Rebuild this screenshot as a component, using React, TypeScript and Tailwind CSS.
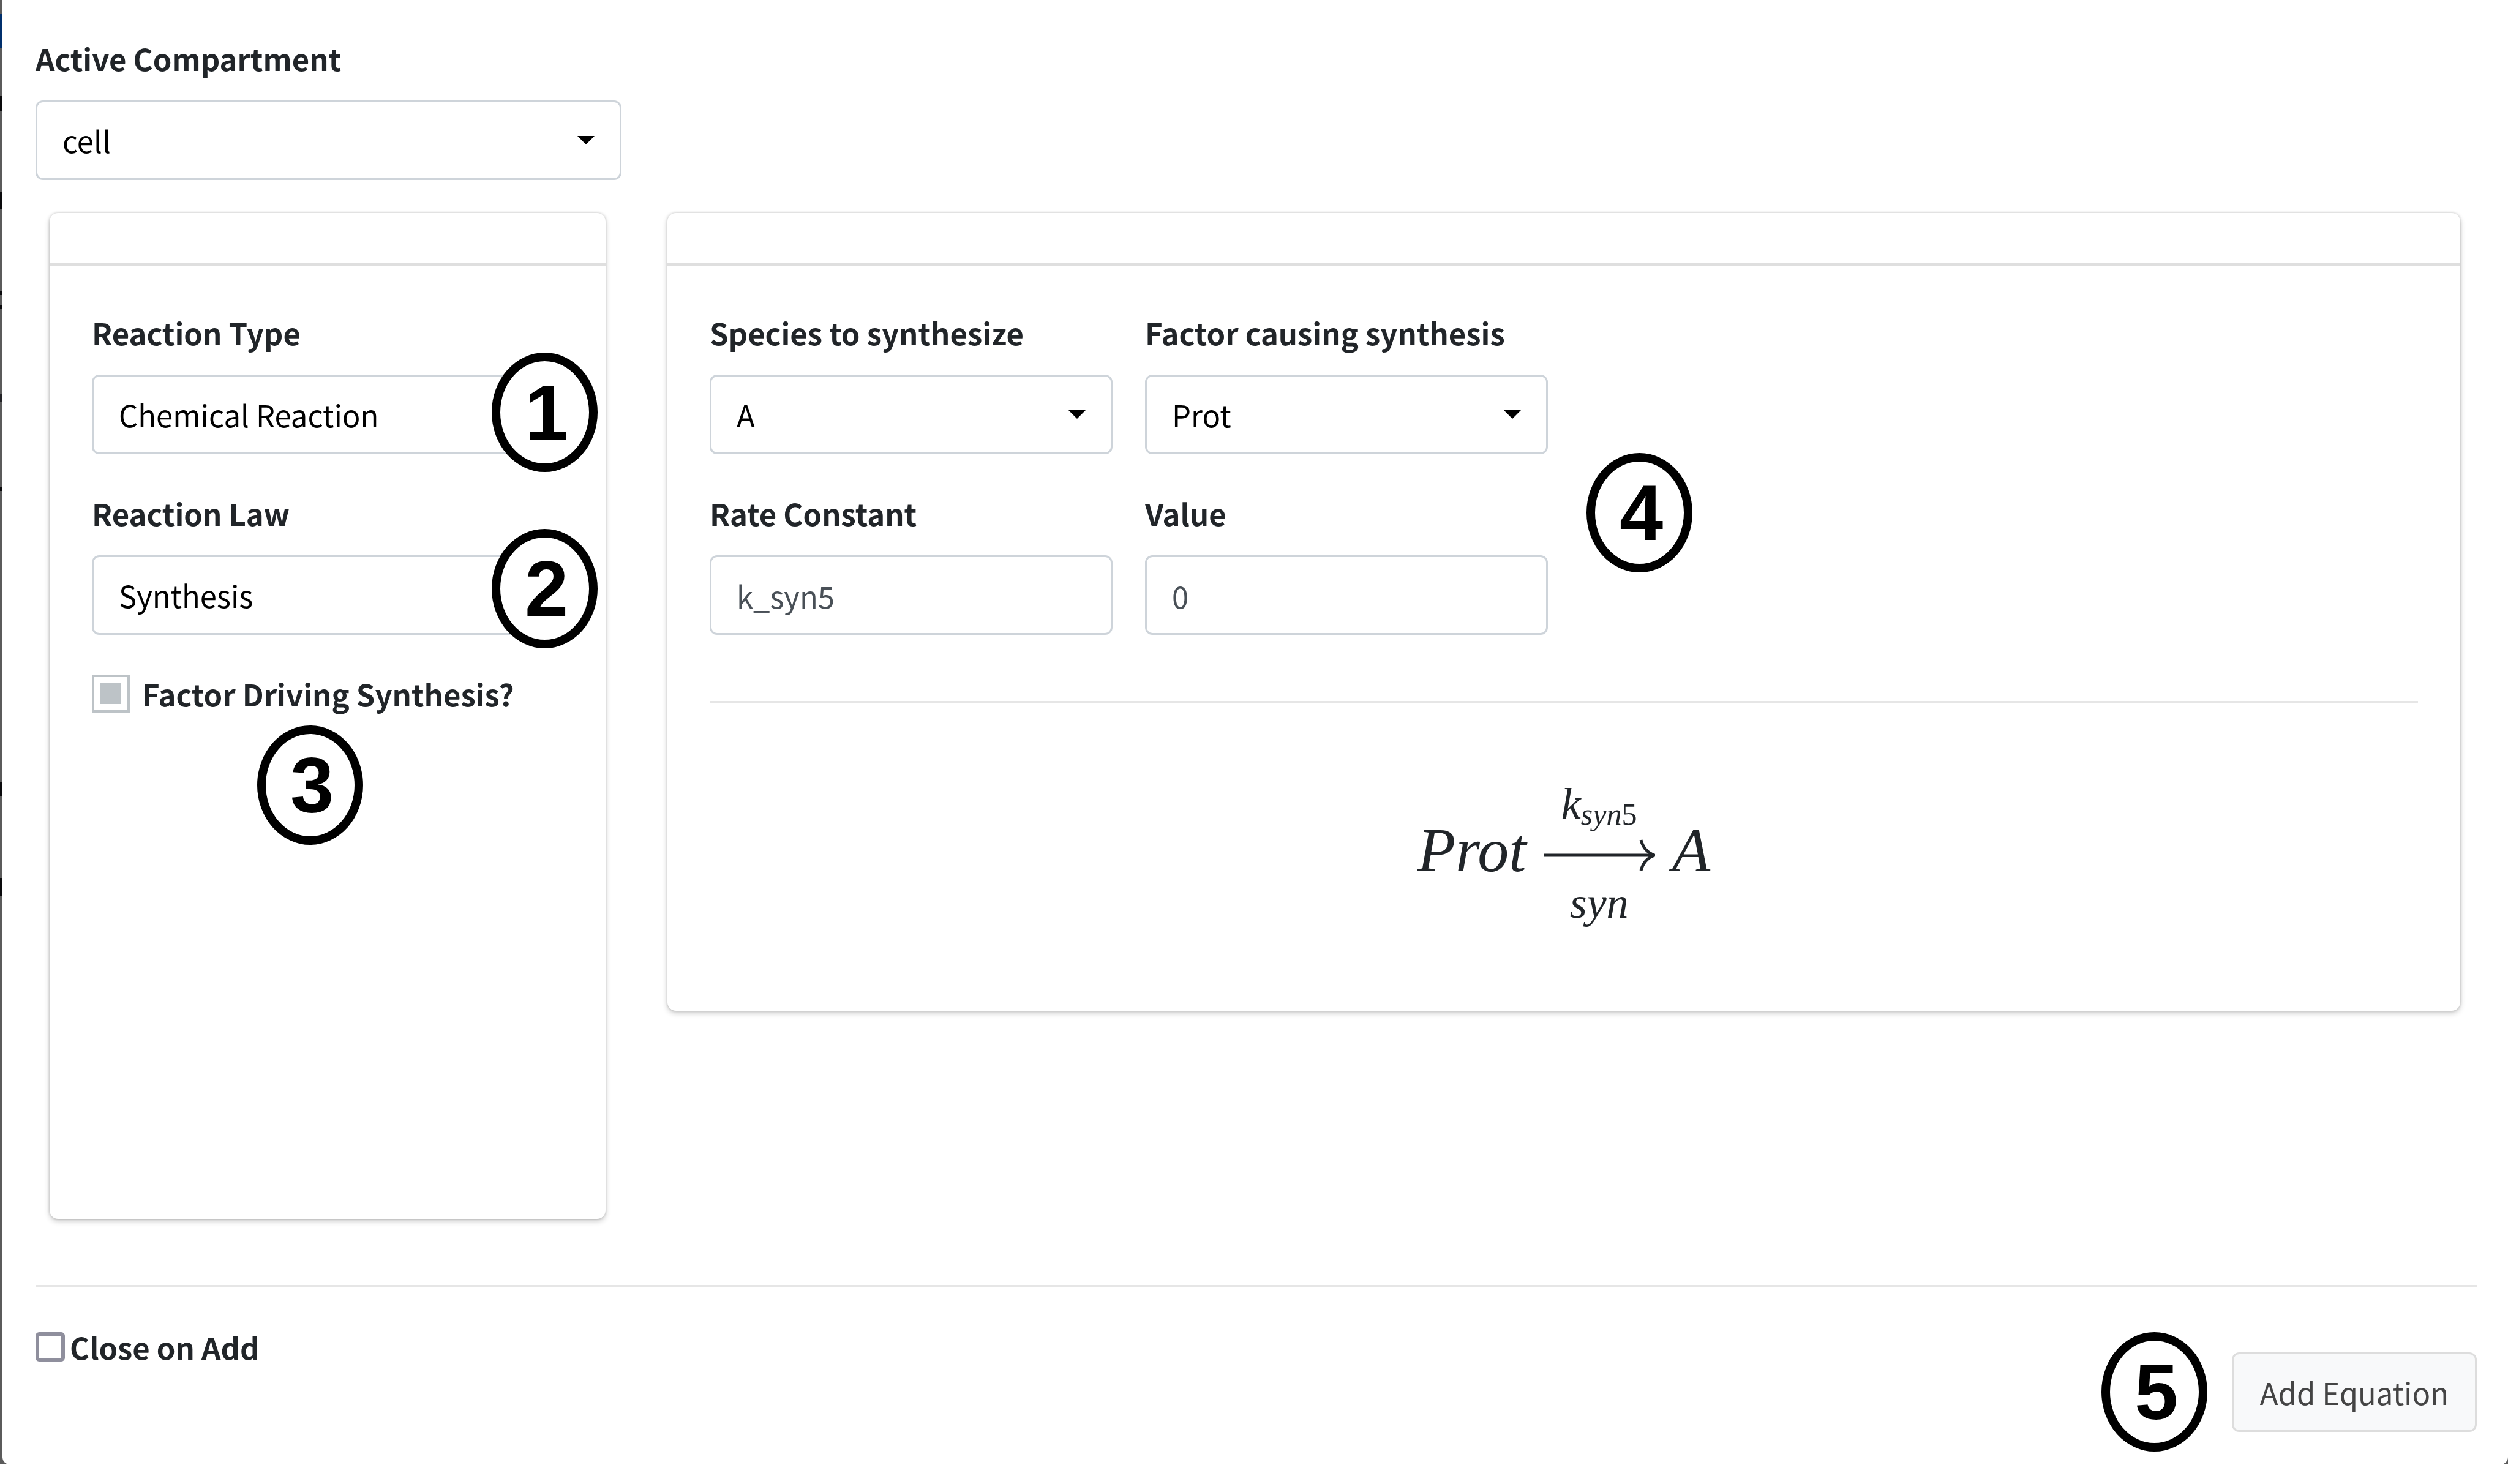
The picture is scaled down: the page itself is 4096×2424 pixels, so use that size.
import type { ReactNode } from "react";

function Badge({ n, className }: { n: number; className: string }) {
  return (
    <span
      className={`absolute z-10 flex h-[195px] w-[173px] items-center justify-center rounded-[50%] border-[14px] border-black bg-white pl-[6px] font-['Liberation_Sans',Arial,sans-serif] text-[128px] leading-none font-bold text-black ${className}`}
    >
      {n}
    </span>
  );
}

function Field({ id, label, children }: { id: string; label: string; children: ReactNode }) {
  return (
    <div className="relative flex flex-col gap-[33px]">
      <label htmlFor={id} className="leading-[72px] font-bold">
        {label}
      </label>
      {children}
    </div>
  );
}

function Select({ id, value }: { id: string; value: string }) {
  return (
    <div className="relative">
      <select
        id={id}
        defaultValue={value}
        className="h-[130px] w-full appearance-none rounded-[12px] border-[3px] border-[#ced4da] bg-white px-[41px] text-black"
      >
        <option>{value}</option>
      </select>
      <svg
        viewBox="0 0 28 14"
        className="pointer-events-none absolute top-[58px] right-[44px] h-[14px] w-[28px]"
        aria-hidden="true"
      >
        <path d="M0 0h28L14 14z" fill="#000" />
      </svg>
    </div>
  );
}

function TextInput({ id, placeholder }: { id: string; placeholder: string }) {
  return (
    <input
      id={id}
      type="text"
      placeholder={placeholder}
      className="h-[130px] w-full rounded-[12px] border-[3px] border-[#ced4da] bg-white px-[41px] placeholder:text-[#495057] placeholder:opacity-100"
    />
  );
}

function Card({ className, children }: { className: string; children: ReactNode }) {
  return (
    <section
      className={`rounded-[14px] bg-white shadow-[0_0_4px_rgba(0,0,0,0.2),0_4px_10px_rgba(0,0,0,0.2)] ${className}`}
    >
      <header className="h-[86px] border-b-[4px] border-[#dfdfdf]" />
      <div className="px-[69px] pt-[73px]">{children}</div>
    </section>
  );
}

function Formula() {
  return (
    <div className="flex items-center justify-center gap-[28px] pt-[127px] font-['Liberation_Serif','Times_New_Roman',serif] text-[102px] leading-[120px] text-[#212529] italic">
      <span className="pb-[10px]">Prot</span>
      <span className="flex flex-col items-center">
        <span className="text-[72px] leading-[76px]">
          k<sub className="bottom-[-10px] text-[50px]">syn<span className="not-italic">5</span></sub>
        </span>
        <svg viewBox="0 0 182 52" className="mt-[20px] mb-[14px] h-[52px] w-[182px]" fill="none" aria-hidden="true">
          <path d="M0 26H178" stroke="#212529" strokeWidth="5" />
          <path d="M159 1C162 13 170 22 181 26C170 30 162 39 159 51" stroke="#212529" strokeWidth="5" />
        </svg>
        <span className="text-[72px] leading-[76px]">syn</span>
      </span>
      <span className="pb-[10px]">A</span>
    </div>
  );
}

const edge = [
  { tone: "bg-[#5b5b5b]", grow: 23 },
  { tone: "bg-[#002f6c]", grow: 56 },
  { tone: "bg-[#5b5b5b]", grow: 79 },
  { tone: "bg-[#0a0a0c]", grow: 24 },
  { tone: "bg-[#5b5b5b]", grow: 134 },
  { tone: "bg-[#0a0a0c]", grow: 28 },
  { tone: "bg-[#5b5b5b]", grow: 134 },
  { tone: "bg-[#0a0a0c]", grow: 7 },
  { tone: "bg-[#5b5b5b]", grow: 17 },
  { tone: "bg-[#0a0a0c]", grow: 6 },
  { tone: "bg-[#5b5b5b]", grow: 139 },
  { tone: "bg-[#222226]", grow: 14 },
  { tone: "bg-[#5b5b5b]", grow: 139 },
  { tone: "bg-[#0a0a0c]", grow: 7 },
  { tone: "bg-[#5b5b5b]", grow: 479 },
  { tone: "bg-[#0a0a0c]", grow: 22 },
  { tone: "bg-[#5b5b5b]", grow: 135 },
  { tone: "bg-[#0a0a0c]", grow: 30 },
  { tone: "bg-[#5b5b5b]", grow: 934 },
];

export default function App() {
  return (
    <main className="bg-white font-['Noto_Sans_CJK_SC',sans-serif] text-[49px] text-[#212529]">
      <div className="relative bg-[#5b5b5b] pl-1">
        <div className="absolute inset-y-0 left-0 flex w-1 flex-col" aria-hidden="true">
          {edge.map((part, i) => (
            <span key={i} className={part.tone} style={{ flexGrow: part.grow }} />
          ))}
        </div>
        <div className="rounded-b-[12px] bg-white pt-[59px] pr-[51px] pb-[53px] pl-[54px]">
          <div className="w-[957px]">
            <Field id="compartment" label="Active Compartment">
              <Select id="compartment" value="cell" />
            </Field>
          </div>

          <div className="flex items-start gap-[101px] pt-[54px] pr-[27px] pl-[23px]">
            <Card className="min-h-[1643px] w-[908px] shrink-0">
              <div className="flex flex-col gap-[60px]">
                <Field id="type" label="Reaction Type">
                  <Select id="type" value="Chemical Reaction" />
                  <Badge n={1} className="top-[69px] left-[653px]" />
                </Field>
                <Field id="law" label="Reaction Law">
                  <Select id="law" value="Synthesis" />
                  <Badge n={2} className="top-[62px] left-[653px]" />
                </Field>
                <div className="relative flex items-center gap-[20px]">
                  <input
                    id="factor-driving"
                    type="checkbox"
                    defaultChecked
                    className="flex size-[62px] appearance-none items-center justify-center border-[4px] border-[#bdc3c7] bg-white before:size-[34px] before:bg-[#bdc3c7] checked:before:content-['']"
                  />
                  <label htmlFor="factor-driving" className="leading-[72px] font-bold whitespace-nowrap">
                    Factor Driving Synthesis?
                  </label>
                  <Badge n={3} className="top-[88px] left-[270px]" />
                </div>
              </div>
            </Card>

            <Card className="min-h-[1303px] flex-1">
              <div className="relative grid w-[1369px] grid-cols-2 gap-x-[53px] gap-y-[60px]">
                <Field id="species" label="Species to synthesize">
                  <Select id="species" value="A" />
                </Field>
                <Field id="factor" label="Factor causing synthesis">
                  <Select id="factor" value="Prot" />
                </Field>
                <Field id="rate" label="Rate Constant">
                  <TextInput id="rate" placeholder="k_syn5" />
                </Field>
                <Field id="value" label="Value">
                  <TextInput id="value" placeholder="0" />
                </Field>
                <Badge n={4} className="top-[233px] left-[1432px]" />
              </div>
              <hr className="mt-[108px] border-t-[3px] border-[#e6e6e6]" />
              <Formula />
            </Card>
          </div>

          <hr className="mt-[108px] border-t-[4px] border-[#e6e6e6]" />
          <footer className="flex items-start justify-between pt-[61px]">
            <div className="flex items-center gap-[8px]">
              <input
                id="close-on-add"
                type="checkbox"
                className="size-[48px] appearance-none rounded-[6px] border-[6px] border-[#8f8f9d] bg-white"
              />
              <label htmlFor="close-on-add" className="leading-[72px] font-bold">
                Close on Add
              </label>
            </div>
            <div className="relative pt-[45px]">
              <Badge n={5} className="top-[12px] right-[440px]" />
              <button
                type="button"
                className="h-[130px] w-[400px] rounded-[12px] border-[3px] border-[#dddddd] bg-[#f8f9fa] whitespace-nowrap text-[#444444]"
              >
                Add Equation
              </button>
            </div>
          </footer>
        </div>
      </div>
    </main>
  );
}
